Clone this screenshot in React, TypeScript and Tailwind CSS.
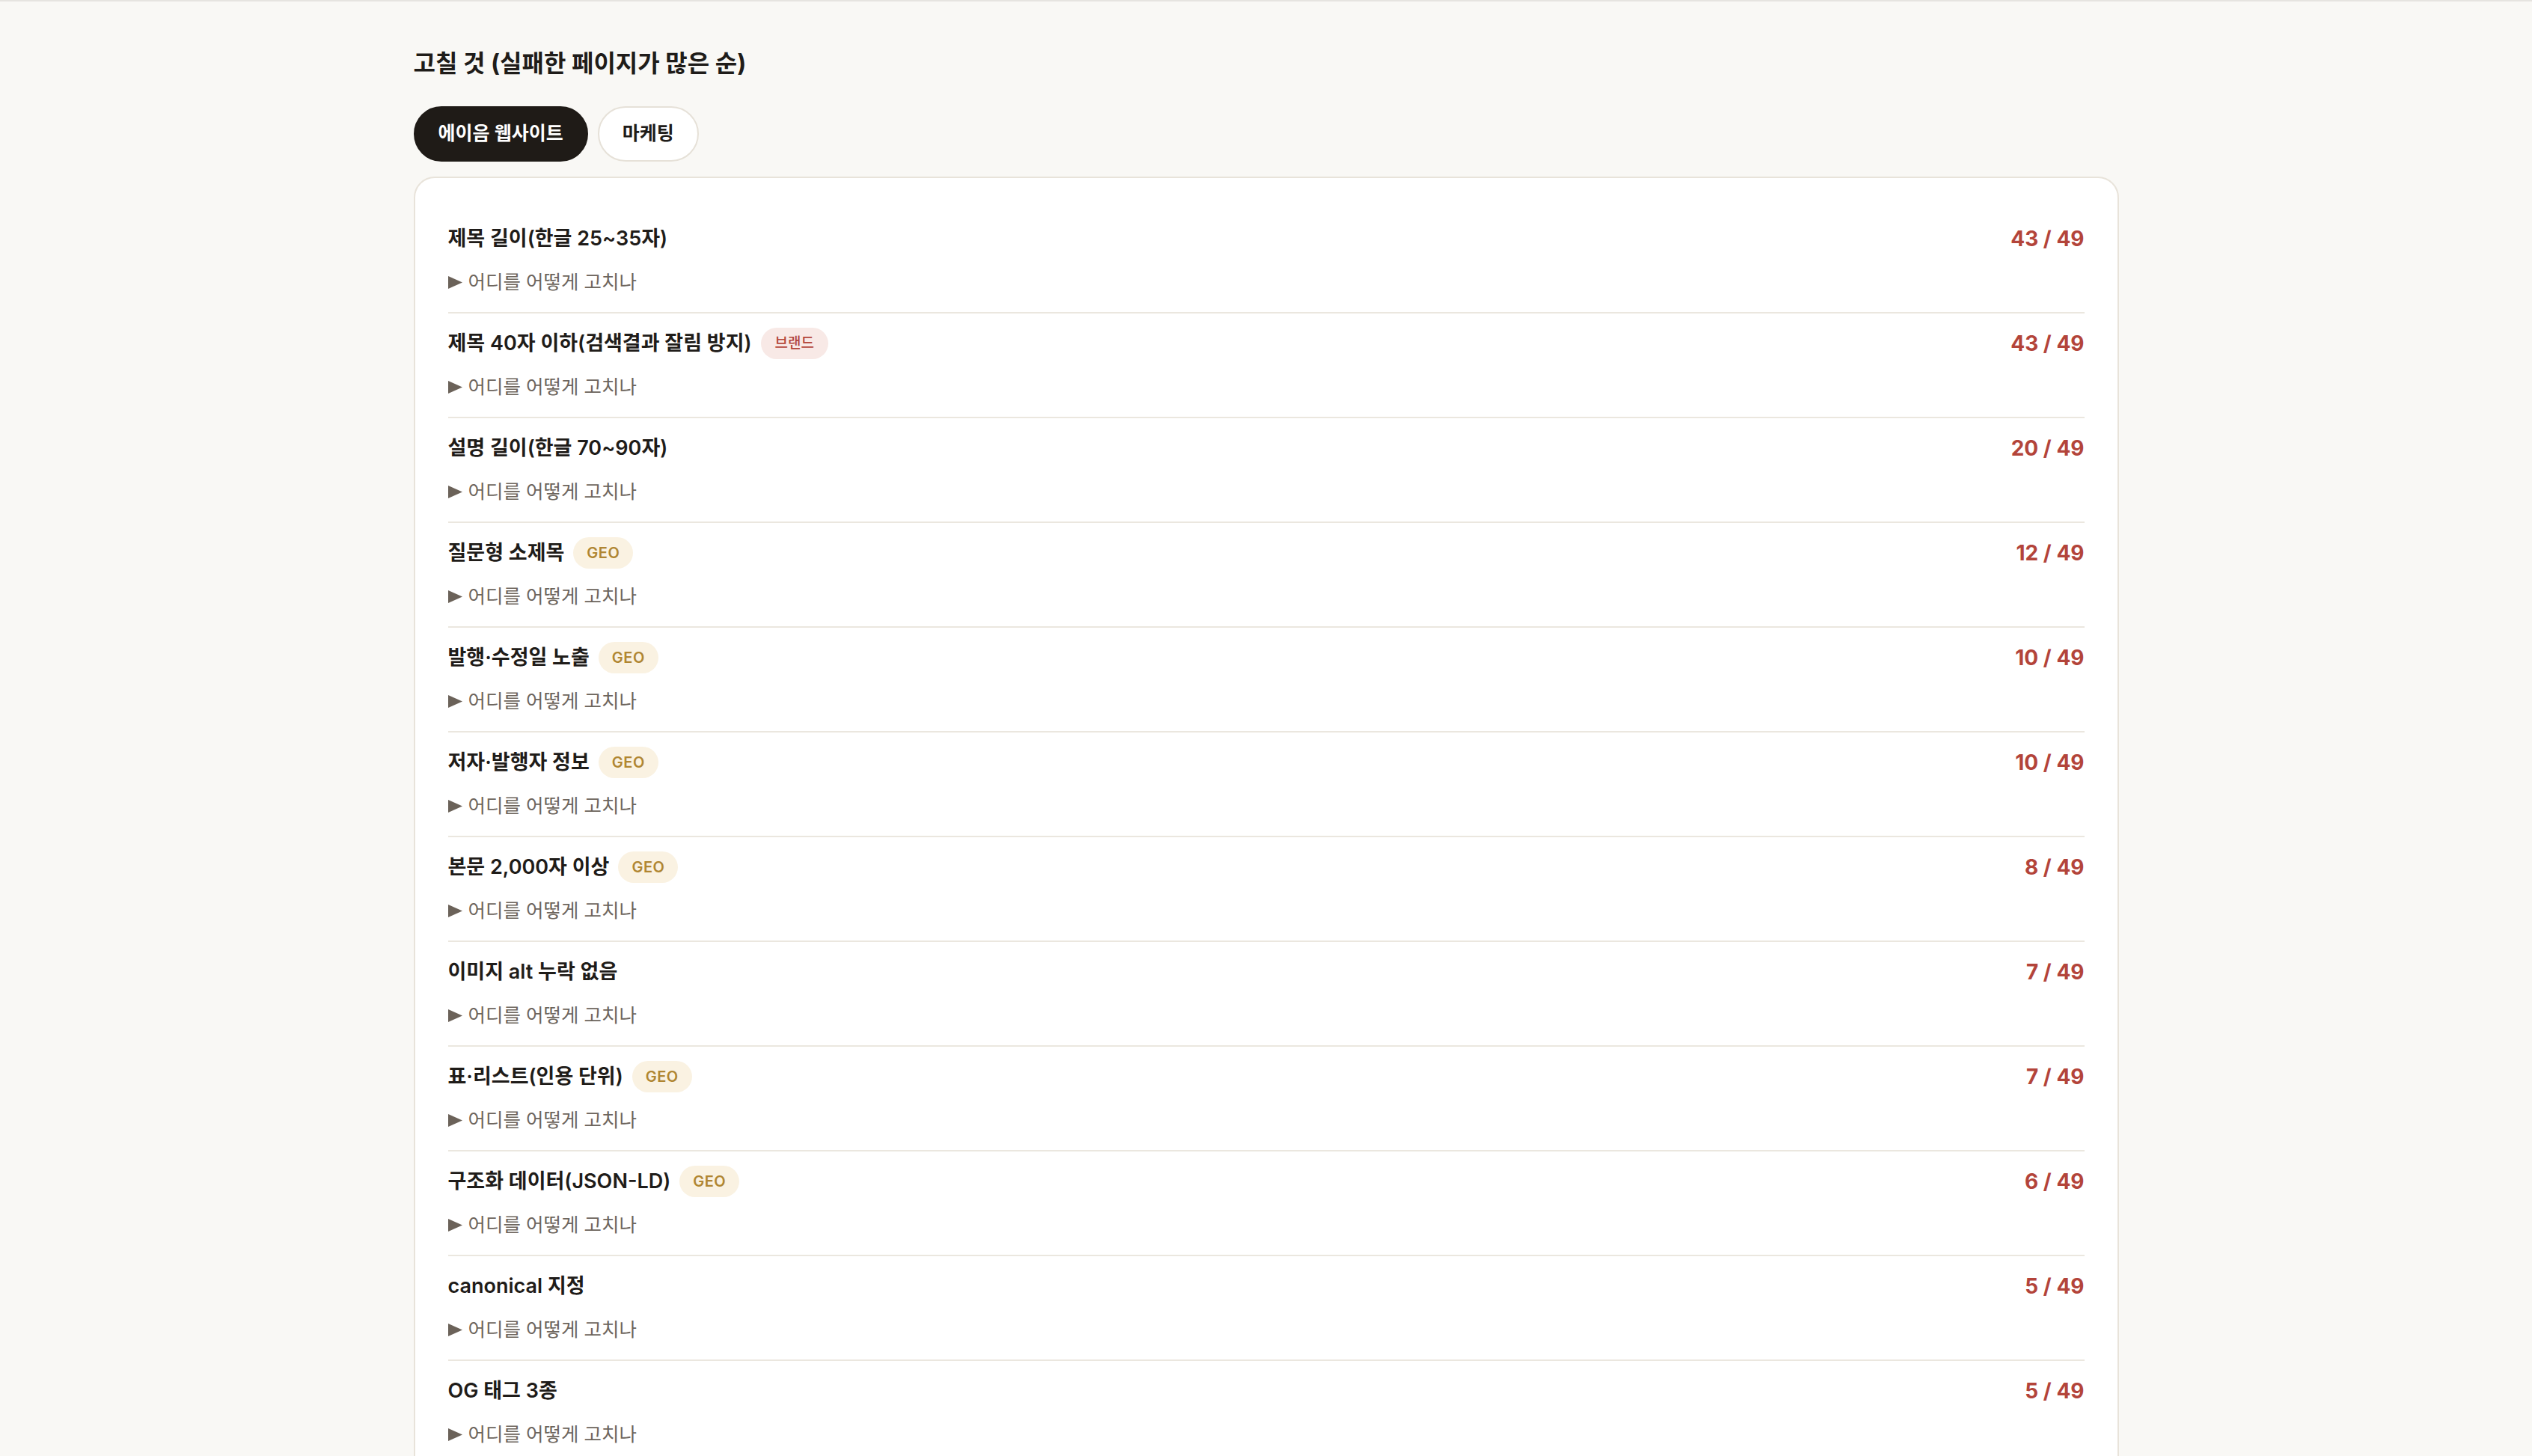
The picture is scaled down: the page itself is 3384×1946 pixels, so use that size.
import { useState } from "react";

type Tag = "브랜드" | "GEO";

type Check = {
  label: string;
  failed: number;
  tag?: Tag;
};

const TOTAL = 49;

const checks: Check[] = [
  { label: "제목 길이(한글 25~35자)", failed: 43 },
  { label: "제목 40자 이하(검색결과 잘림 방지)", failed: 43, tag: "브랜드" },
  { label: "설명 길이(한글 70~90자)", failed: 20 },
  { label: "질문형 소제목", failed: 12, tag: "GEO" },
  { label: "발행·수정일 노출", failed: 10, tag: "GEO" },
  { label: "저자·발행자 정보", failed: 10, tag: "GEO" },
  { label: "본문 2,000자 이상", failed: 8, tag: "GEO" },
  { label: "이미지 alt 누락 없음", failed: 7 },
  { label: "표·리스트(인용 단위)", failed: 7, tag: "GEO" },
  { label: "구조화 데이터(JSON-LD)", failed: 6, tag: "GEO" },
  { label: "canonical 지정", failed: 5 },
  { label: "OG 태그 3종", failed: 5 },
];

const tabs = ["에이음 웹사이트", "마케팅"];

function TagBadge({ tag }: { tag: Tag }) {
  if (tag === "GEO") {
    return (
      <span className="inline-flex h-[42px] items-center rounded-full bg-[#faf2e2] px-[18px] text-[20px] font-semibold tracking-wide text-[#b08632]">
        GEO
      </span>
    );
  }
  return (
    <span className="inline-flex h-[42px] items-center rounded-full bg-[#f8e9e6] px-[19px] text-[19px] font-medium text-[#b4463b]">
      {tag}
    </span>
  );
}

function CheckRow({ item }: { item: Check }) {
  return (
    <div className="flex items-start justify-between border-b-2 border-[#ebe7df] py-[19px]">
      <div className="flex flex-col">
        <div className="flex h-[42px] items-center gap-[12px]">
          <span className="text-[27px] font-semibold text-[#1f1c19]">{item.label}</span>
          {item.tag && <TagBadge tag={item.tag} />}
        </div>
        <details className="mt-[16px]">
          <summary className="flex h-[42px] cursor-pointer list-none items-center gap-[8px] text-[25.5px] text-[#6d655d] [&::-webkit-details-marker]:hidden">
            <svg width="19" height="17" viewBox="0 0 19 17" className="shrink-0">
              <polygon points="0,0 19,8.5 0,17" fill="#6b6259" />
            </svg>
            어디를 어떻게 고치나
          </summary>
        </details>
      </div>
      <div className="flex h-[42px] items-center text-[28px] font-bold text-[#b3443a]">
        {item.failed} / {TOTAL}
      </div>
    </div>
  );
}

export default function App() {
  const [active, setActive] = useState(0);

  return (
    <div
      className="min-h-screen border-t-2 border-[#e6e4e0] bg-[#f9f8f5]"
      style={{ fontFamily: "Inter, 'Noto Sans CJK KR', sans-serif" }}
    >
      <div className="mx-auto max-w-[2279px] pt-[63px] pb-20">
        <h2 className="text-[32px] leading-[40px] font-bold text-[#1f1c19]">고칠 것 (실패한 페이지가 많은 순)</h2>

        <div className="mt-[37px] flex gap-[13px]">
          {tabs.map((t, i) => (
            <button
              key={t}
              onClick={() => setActive(i)}
              className={
                i === active
                  ? "h-[74px] rounded-full border-2 border-[#1f1b17] bg-[#1f1b17] px-[31px] text-[25px] font-semibold text-white"
                  : "h-[74px] rounded-full border-2 border-[#e6e1d8] bg-white px-[31px] text-[25px] font-semibold text-[#1f1c19]"
              }
            >
              {t}
            </button>
          ))}
        </div>

        <div className="mt-[20px] rounded-[28px] border-2 border-[#e8e3da] bg-white px-[44px] pt-[41px] pb-[20px]">
          {checks.map((c) => (
            <CheckRow key={c.label} item={c} />
          ))}
        </div>
      </div>
    </div>
  );
}
